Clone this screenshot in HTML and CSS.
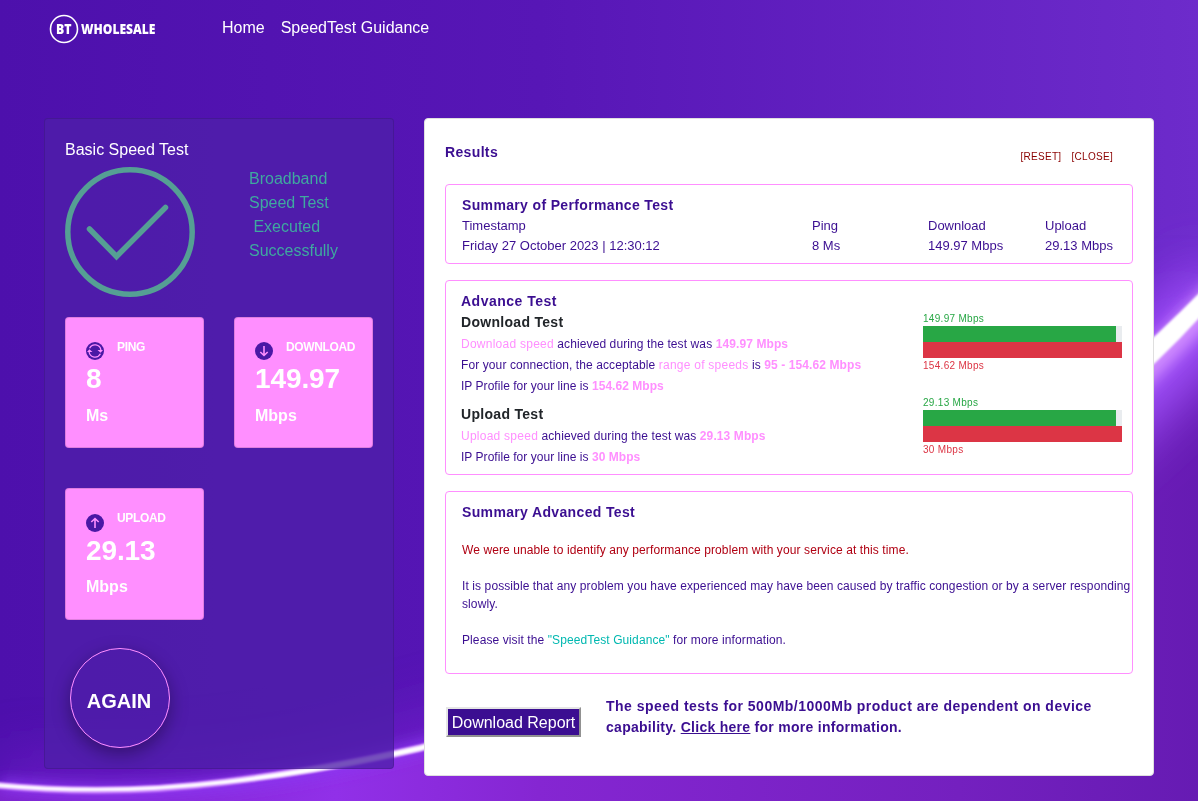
FILE: index.html
```html
<!DOCTYPE html>
<html lang="en">
<head>
<meta charset="UTF-8">
<meta name="viewport" content="width=device-width, initial-scale=1.0">
<title>BT Wholesale Speed Test</title>
<link rel="stylesheet" href="styles.css">
</head>
<body>
<svg class="page-bg" viewBox="0 0 1198 801" preserveAspectRatio="none" aria-hidden="true">
    <defs>
        <linearGradient id="base" x1="0" y1="0" x2="1" y2="0">
            <stop offset="0" stop-color="#4d10ac"/>
            <stop offset="0.45" stop-color="#5716b6"/>
            <stop offset="1" stop-color="#6d2bcb"/>
        </linearGradient>
        <linearGradient id="below" gradientUnits="userSpaceOnUse" x1="0" y1="0" x2="1198" y2="0">
            <stop offset="0" stop-color="#7a22cc"/>
            <stop offset="0.28" stop-color="#9130e8"/>
            <stop offset="0.45" stop-color="#8526d2"/>
            <stop offset="0.8" stop-color="#7420bf"/>
            <stop offset="1" stop-color="#661bb3"/>
        </linearGradient>
        <filter id="blur2"><feGaussianBlur stdDeviation="0.8"/></filter>
        <filter id="blur8" x="-10%" y="-20%" width="120%" height="140%"><feGaussianBlur stdDeviation="7"/></filter>
        <filter id="blur30" x="-20%" y="-30%" width="140%" height="160%"><feGaussianBlur stdDeviation="28"/></filter>
    </defs>
    <rect width="1198" height="801" fill="url(#base)"/>
    <path d="M0 785 Q200 808 420 747 C700 670 1000 520 1198 305" fill="none" stroke="#7d22d6" stroke-width="60" opacity="0.6" filter="url(#blur30)"/>
    <path d="M0 785 Q200 808 420 747 C700 670 1000 520 1198 305 V801 H0 Z" fill="url(#below)"/>
    <path d="M850 590 C1000 510 1110 420 1230 290" fill="none" stroke="#a455ff" stroke-width="80" filter="url(#blur30)"/>
    <path d="M0 785 Q200 808 420 747 C700 670 1000 520 1198 305" fill="none" stroke="#8a35f0" stroke-width="12" filter="url(#blur8)"/>
    <path d="M1060 450 Q1130 385 1230 282" fill="none" stroke="#cf8bff" stroke-width="30" filter="url(#blur8)"/>
    <path d="M-5 785 Q110 797 225 782 T420 748 C700 670 1000 520 1210 295" fill="none" stroke="#c77bff" stroke-width="7" filter="url(#blur2)"/>
    <path d="M-5 783 Q110 794 225 780 Q320 768 420 745.500 C700 660 1000 500 1210 282 V306 C1000 540 700 670 420 751 Q320 774 225 784 Q110 797 -5 787 Z" fill="#fff" filter="url(#blur2)"/>
</svg>

<header class="navbar">
    <svg class="logo" width="150" height="32" viewBox="0 0 150 32">
        <circle cx="16" cy="16" r="13.500" fill="none" stroke="#fff" stroke-width="1.600"/>
        <text x="8" y="21" textLength="15.500" lengthAdjust="spacingAndGlyphs">BT</text>
        <text x="33" y="21" textLength="74.500" lengthAdjust="spacingAndGlyphs">WHOLESALE</text>
    </svg>
    <nav class="links">
        <a href="#">Home</a>
        <a href="#">SpeedTest Guidance</a>
    </nav>
</header>

<main class="container">
    <section class="basic">
        <h2>Basic Speed Test</h2>
        <div class="status">
            <svg width="130" height="130" viewBox="0 0 130 130" fill="none" stroke="#559f94" stroke-width="5.500">
                <circle cx="65" cy="65" r="62.200"/>
                <path d="M24.500 62 L51.500 89.500 L100.500 40.500" stroke-linecap="round"/>
            </svg>
            <p>Broadband<br>Speed Test<br>&nbsp;Executed<br>Successfully</p>
        </div>
        <div class="tiles">
            <div class="tile">
                <div class="tile-head">
                    <svg width="18" height="18" viewBox="0 0 18 18" fill="none" stroke="#ff8fff" stroke-width="1.300">
                        <circle cx="9" cy="9" r="9" fill="#4a18a5" stroke="none"/>
                        <path d="M3.600 6.200 A6 6 0 0 1 14.900 8 M14.400 11.800 A6 6 0 0 1 3.100 10"/>
                        <path d="M11.500 8 H17 L14.600 10.800 Z M6.500 10 H1 L3.400 7.200 Z" fill="#ff8fff" stroke="none"/>
                    </svg>
                    <span>PING</span>
                </div>
                <div class="value">8</div>
                <div class="unit">Ms</div>
            </div>
            <div class="tile">
                <div class="tile-head">
                    <svg width="18" height="18" viewBox="0 0 18 18" fill="none" stroke="#ff8fff" stroke-width="1.600">
                        <circle cx="9" cy="9" r="9" fill="#4a18a5" stroke="none"/>
                        <path d="M9 4 V13.500 M5.300 10 L9 13.500 L12.700 10"/>
                    </svg>
                    <span>DOWNLOAD</span>
                </div>
                <div class="value">149.97</div>
                <div class="unit">Mbps</div>
            </div>
            <div class="tile tile-upload">
                <div class="tile-head">
                    <svg width="18" height="18" viewBox="0 0 18 18" fill="none" stroke="#ff8fff" stroke-width="1.600">
                        <circle cx="9" cy="9" r="9" fill="#4a18a5" stroke="none"/>
                        <path d="M9 14 V4.500 M5.300 8 L9 4.500 L12.700 8"/>
                    </svg>
                    <span>UPLOAD</span>
                </div>
                <div class="value">29.13</div>
                <div class="unit">Mbps</div>
            </div>
        </div>
        <button class="again">AGAIN</button>
    </section>

    <section class="results">
        <div class="results-head">
            <h3>Results</h3>
            <div class="actions"><a href="#">[RESET]</a><a href="#">[CLOSE]</a></div>
        </div>

        <div class="box performance">
            <h3>Summary of Performance Test</h3>
            <div class="perf-row"><span>Timestamp</span><span>Ping</span><span>Download</span><span>Upload</span></div>
            <div class="perf-row"><span>Friday 27 October 2023 | 12:30:12</span><span>8 Ms</span><span>149.97 Mbps</span><span>29.13 Mbps</span></div>
        </div>

        <div class="box advance">
            <div class="details">
                <h3>Advance Test</h3>
                <h4>Download Test</h4>
                <p><i>Download speed</i> achieved during the test was <b>149.97 Mbps</b></p>
                <p>For your connection, the acceptable <i>range of speeds</i> is <b>95 - 154.62 Mbps</b></p>
                <p class="profile">IP Profile for your line is <b>154.62 Mbps</b></p>
                <h4 class="second">Upload Test</h4>
                <p><i>Upload speed</i> achieved during the test was <b>29.13 Mbps</b></p>
                <p class="profile">IP Profile for your line is <b>30 Mbps</b></p>
            </div>
            <div class="charts">
                <div class="chart">
                    <span class="green">149.97 Mbps</span>
                    <div class="bar"><div class="fill" style="width: 97%"></div></div>
                    <div class="bar"><div class="fill max" style="width: 100%"></div></div>
                    <span class="red">154.62 Mbps</span>
                </div>
                <div class="chart">
                    <span class="green">29.13 Mbps</span>
                    <div class="bar"><div class="fill" style="width: 97%"></div></div>
                    <div class="bar"><div class="fill max" style="width: 100%"></div></div>
                    <span class="red">30 Mbps</span>
                </div>
            </div>
        </div>

        <div class="box summary">
            <h3>Summary Advanced Test</h3>
            <p class="notice">We were unable to identify any performance problem with your service at this time.</p>
            <p>It is possible that any problem you have experienced may have been caused by traffic congestion or by a server responding slowly.</p>
            <p>Please visit the <a href="#">"SpeedTest Guidance"</a> for more information.</p>
        </div>

        <div class="results-foot">
            <button class="report">Download Report</button>
            <div class="note">
                <p class="wide">The speed tests for 500Mb/1000Mb product are dependent on device</p>
                <p>capability. <a href="#">Click here</a> for more information.</p>
            </div>
        </div>
    </section>
</main>
</body>
</html>
```
FILE: styles.css
```css
* {
    box-sizing: border-box;
}

body {
    margin: 0;
    height: 801px;
    overflow: hidden;
    font-family: "Liberation Sans", Arial, sans-serif;
    font-size: 16px;
    line-height: 24px;
    color: #3b0e91;
    background-color: #5514b4;
}

h2, h3, h4, p {
    margin: 0;
}

.page-bg {
    position: fixed;
    top: 0;
    left: 0;
    width: 100%;
    height: 100%;
    z-index: -1;
}

.navbar {
    display: flex;
    height: 118px;
    padding: 13px 0 0 48px;
}

.logo text {
    font-family: "Open Sans", "Noto Sans", sans-serif;
    font-weight: 800;
    font-size: 14px;
    fill: #fff;
}

.links {
    display: flex;
    gap: 16px;
    margin-left: 24px;
    padding-top: 3px;
}

.links a {
    color: #fff;
    text-decoration: none;
}

.container {
    display: grid;
    grid-template-columns: 350px 730px;
    gap: 30px;
    width: 1110px;
    margin: 0 auto;
    align-items: start;
}

.basic {
    height: 651px;
    padding: 19px 20px;
    border: 1px solid rgba(0, 0, 0, 0.125);
    border-radius: 4px;
    background-color: rgba(78, 31, 169, 0.78);
    color: #fff;
}

.basic h2 {
    font-size: 16px;
    font-weight: normal;
}

.status {
    display: flex;
    gap: 54px;
    margin-top: 5px;
    color: #3fa99f;
}

.tiles {
    display: grid;
    grid-template-columns: 139px 139px;
    gap: 40px 30px;
    margin-top: 20px;
}

.tile {
    height: 131px;
    padding: 20px;
    border: 1px solid rgba(0, 0, 0, 0.125);
    border-radius: 4px;
    background-color: #ff8fff;
    font-weight: bold;
}

.tile-head {
    display: flex;
    height: 25px;
    gap: 13px;
    font-size: 12px;
    line-height: 18px;
    letter-spacing: -0.35px;
}

.tile-head svg {
    flex: none;
    margin-top: 4px;
}

.value {
    font-size: 28px;
    line-height: 32px;
    letter-spacing: -0.1px;
}

.unit {
    margin-top: 9px;
    line-height: 24px;
}

.tile-upload {
    height: 132px;
}

.tile-upload .tile-head {
    height: 26px;
}

.tile-upload svg {
    margin-top: 5px;
}

.tile-upload .unit {
    margin-top: 8px;
}

.again {
    display: block;
    width: 100px;
    height: 100px;
    margin: 28px 0 0 5px;
    padding: 6px 2px 0 0;
    border: 1px solid #ff8fff;
    border-radius: 50%;
    background-color: transparent;
    box-shadow: 0 6px 18px rgba(0, 0, 0, 0.35);
    color: #fff;
    font-family: inherit;
    font-size: 20px;
    font-weight: bold;
}

.results {
    height: 658px;
    padding: 20px;
    border: 1px solid #dfdfdf;
    border-radius: 4px;
    background-color: #fff;
}

.results h3 {
    font-size: 14px;
    line-height: 21px;
    letter-spacing: 0.35px;
}

.results-head {
    display: flex;
    justify-content: space-between;
    height: 45px;
    padding: 3px 20px 0 0;
}

.actions {
    display: flex;
    gap: 10px;
    padding-top: 3px;
    font-size: 10px;
    letter-spacing: 0.3px;
}

.actions a {
    color: #8b0000;
    text-decoration: none;
}

.box {
    border: 1px solid #ff8fff;
    border-radius: 4px;
    margin-bottom: 16px;
}

.performance {
    height: 80px;
    padding: 10px 0 0 16px;
    font-size: 13px;
    line-height: 20px;
}

.perf-row {
    display: grid;
    grid-template-columns: 350px 116px 117px auto;
}

.advance {
    display: flex;
    justify-content: space-between;
    height: 195px;
    padding: 10px 10px 0 15px;
    font-size: 12px;
    line-height: 21px;
    letter-spacing: 0.1px;
}

.advance h3 {
    letter-spacing: 0.5px;
}

.advance h4 {
    margin-bottom: 1px;
    color: #212529;
    font-size: 14px;
    line-height: 21px;
    letter-spacing: 0.3px;
}

.advance .second {
    margin-top: 7px;
}

.advance i {
    color: #ff8fff;
    font-style: normal;
    letter-spacing: 0.25px;
}

.advance b {
    color: #ff8fff;
}

.advance .profile {
    letter-spacing: 0.04px;
}

.charts {
    width: 199px;
    padding-top: 21px;
}

.chart {
    height: 84px;
    font-size: 10px;
    line-height: 14px;
    letter-spacing: 0.3px;
}

.chart span {
    display: block;
}

.green {
    color: #28a745;
}

.red {
    color: #dc3545;
    padding-top: 1px;
}

.bar {
    height: 16px;
    background-color: #e9ecef;
}

.fill {
    height: 16px;
    background-color: #28a745;
}

.fill.max {
    background-color: #dc3545;
}

.summary {
    height: 183px;
    padding: 10px 0 0 16px;
    font-size: 12px;
    line-height: 18px;
    letter-spacing: 0.1px;
}

.summary p {
    margin-top: 18px;
}

.summary .notice {
    color: #b00012;
}

.summary a {
    color: #00b8b0;
    text-decoration: none;
}

.results-foot {
    display: flex;
    gap: 25px;
    padding: 6px 0 0 1px;
}

.report {
    width: 135px;
    height: 30px;
    margin-top: 11px;
    padding: 1px 0 0;
    border: 2px outset #e5e5e5;
    background-color: #3b0e91;
    color: #fff;
    font-family: inherit;
    font-size: 16px;
}

.note {
    font-size: 14px;
    font-weight: bold;
    line-height: 21px;
    letter-spacing: 0.28px;
}

.note .wide {
    letter-spacing: 0.48px;
}

.note a {
    color: inherit;
}
```
